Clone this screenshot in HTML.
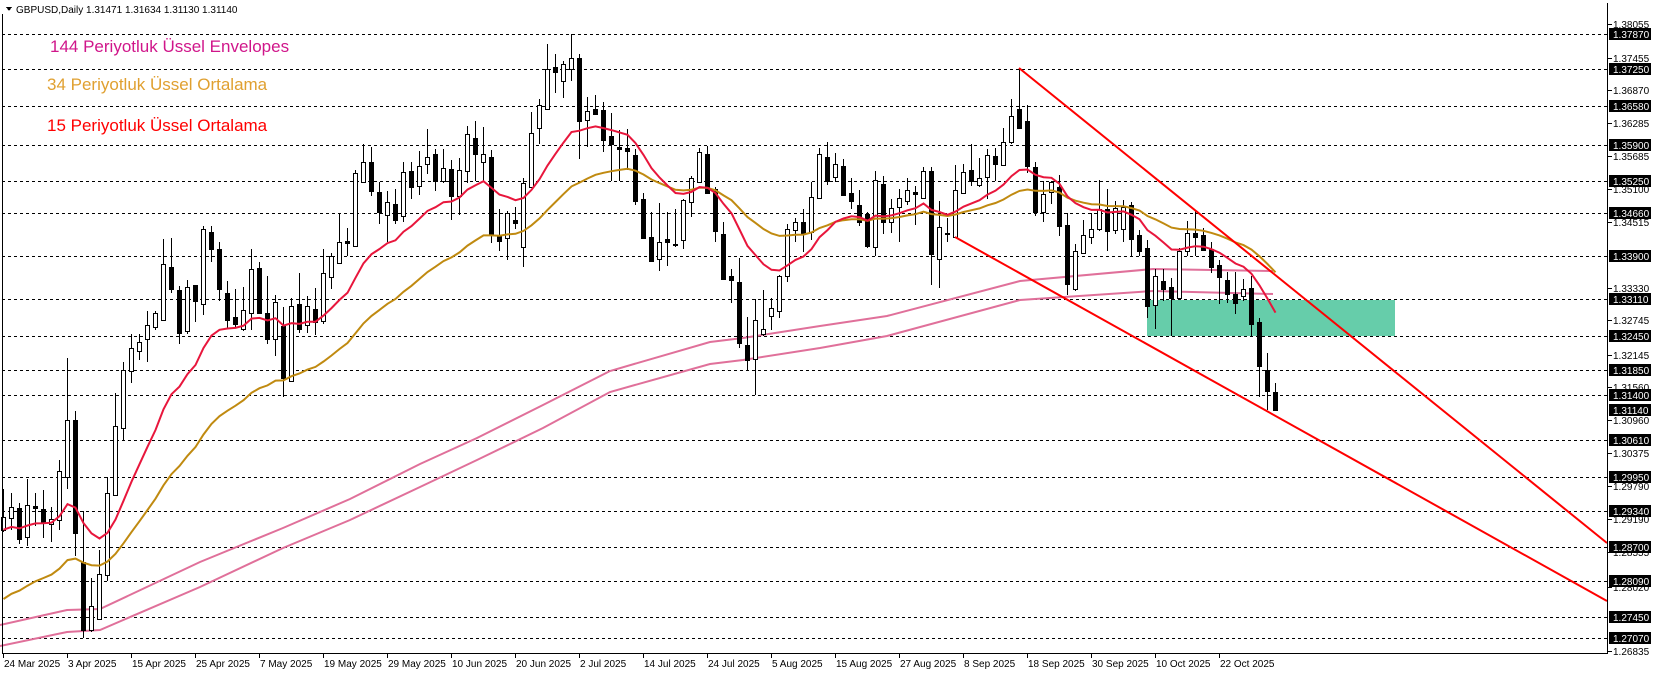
<!DOCTYPE html>
<html><head><meta charset="utf-8"><style>
html,body{margin:0;padding:0;background:#fff;}
body{width:1653px;height:675px;overflow:hidden;position:relative;font-family:"Liberation Sans",sans-serif;}
svg{position:absolute;left:0;top:0;}
</style></head><body>
<svg id="c" width="1653" height="675" xmlns="http://www.w3.org/2000/svg" shape-rendering="crispEdges">
<g id="grid"></g>
<rect x="1147" y="300" width="248" height="36" fill="#66cdaa"/>
<g id="env" fill="none" stroke="#e0709a" stroke-width="2" shape-rendering="auto">
<polyline points="0,625 67,610 100,609 200,562 283,528 350,499 420,464 477,438 543,405 610,371 710,342 743,338 820,326 887,316 1020,281 1153,269 1273,271"/>
<polyline points="0,646 67,632 100,630 200,587 283,548 350,520 420,487 477,460 543,428 610,392 710,364 743,360 820,348 887,336 1020,300 1153,291 1273,294"/>
</g>
<g id="candles"></g>
<polyline id="ema34" fill="none" stroke="#c08a10" stroke-width="2" shape-rendering="auto"/>
<polyline id="ema15" fill="none" stroke="#e8163c" stroke-width="2" shape-rendering="auto"/>
<g stroke="#ff0000" stroke-width="2" shape-rendering="auto">
<line x1="1019" y1="68" x2="1607" y2="543"/>
<line x1="955" y1="237" x2="1607" y2="601"/>
</g>
<g stroke="#000" stroke-width="1">
<line x1="2.5" y1="14" x2="2.5" y2="653"/>
<line x1="1607.5" y1="3" x2="1607.5" y2="653"/>
<line x1="2" y1="653.5" x2="1608" y2="653.5"/>
</g>
<g id="axis" font-family="Liberation Sans, sans-serif" font-size="10"></g>
<g id="dates" font-family="Liberation Sans, sans-serif" font-size="10" fill="#000"></g>
<polygon points="6,7 12,7 9,11" fill="#000"/>
<text x="16" y="13" font-size="10" font-family="Liberation Sans, sans-serif">GBPUSD,Daily  1.31471 1.31634 1.31130 1.31140</text>
<text x="50" y="52" font-size="17" fill="#d0168a" font-family="Liberation Sans, sans-serif">144 Periyotluk Üssel Envelopes</text>
<text x="47" y="90" font-size="17" fill="#e0a030" font-family="Liberation Sans, sans-serif">34 Periyotluk Üssel Ortalama</text>
<text x="47" y="131" font-size="17" fill="#ff0000" font-family="Liberation Sans, sans-serif">15 Periyotluk Üssel Ortalama</text>
</svg>
<script>
var NS="http://www.w3.org/2000/svg";
function el(t,a,p){var e=document.createElementNS(NS,t);for(var k in a)e.setAttribute(k,a[k]);p.appendChild(e);return e;}
var bars=[[1220,1250,1150,1255,1],[1195,1222,1160,1250,1],[1197,1272,1185,1285,0],[1190,1267,1125,1290,1],[1193,1198,1160,1240,0],[1200,1233,1152,1270,0],[1223,1235,1195,1280,1],[1105,1225,1080,1250,1],[980,1122,830,1150,1],[980,1258,960,1315,0],
[1328,1497,1205,1515,0],[1437,1497,1368,1500,1],[1358,1470,1300,1470,1],[1160,1362,1120,1375,1],[997,1165,915,1165,1],[858,1000,838,1030,1],[805,862,770,890,1],[790,812,770,835,1],[748,782,715,838,1],[718,752,715,760,1],
[598,735,537,735,1],[605,660,535,670,0],[662,768,652,795,0],[655,762,638,770,1],[650,690,650,740,0],[512,697,505,725,1],[520,562,505,595,0],[563,660,545,690,0],[670,735,640,755,0],[728,745,660,755,0],
[712,758,655,762,1],[612,720,563,760,1],[608,718,595,722,0],[720,782,627,795,0],[693,782,675,825,1],[750,877,705,925,0],[702,885,683,885,1],[696,757,622,768,0],[702,748,677,768,1],[708,740,658,773,0],
[622,738,563,745,1],[578,630,573,660,1],[545,597,473,597,1],[542,548,510,580,0],[375,555,368,555,1],[348,397,305,400,1],[348,420,312,432,0],[422,472,398,500,0],[447,478,420,545,1],[452,492,415,500,0],
[373,482,348,495,1],[372,410,348,440,0],[358,408,322,430,1],[337,353,268,378,1],[328,395,318,420,0],[363,395,318,400,1],[365,432,343,490,0],[368,432,338,478,1],[280,370,260,400,1],[290,330,248,395,0],
[328,348,262,395,1],[337,528,320,548,0],[530,542,463,568,0],[475,535,470,590,1],[490,498,460,512,0],[400,557,388,607,1],[278,410,225,410,1],[208,265,195,305,1],[122,220,60,220,1],[115,128,85,180,0],
[108,150,100,192,1],[95,120,35,150,1],[93,248,83,342,0],[223,245,190,312,1],[220,232,185,232,0],[222,295,202,325,0],[285,305,228,395,0],[312,316,270,395,0],[315,322,268,368,0],[332,445,318,455,0],
[440,535,425,538,0],[533,592,472,595,0],[545,587,450,615,1],[538,545,472,603,0],[550,553,465,558,0],[443,540,440,563,1],[388,447,382,483,1],[325,397,315,397,1],[330,425,310,428,0],[415,517,410,545,0],
[525,635,495,637,0],[627,637,612,695,0],[642,793,585,805,0],[797,835,728,860,0],[735,832,685,920,1],[758,770,662,775,1],[707,727,683,760,1],[627,715,625,730,1],[512,628,500,642,1],[497,515,487,545,1],
[496,522,463,570,0],[435,520,398,540,1],[328,438,315,440,1],[337,395,300,405,0],[353,385,327,398,1],[358,430,342,430,0],[425,445,388,463,0],[455,497,418,505,0],[477,555,472,560,0],[393,557,370,580,1],
[403,495,382,525,0],[462,497,440,522,1],[437,460,415,545,1],[417,445,388,455,1],[422,427,407,503,0],[370,437,360,437,1],[370,575,362,650,0],[508,587,445,658,1],[522,525,485,545,0],[417,532,355,533,1],
[373,425,353,425,1],[368,395,305,408,0],[387,405,340,410,1],[332,385,318,440,1],[335,353,315,395,0],[300,355,265,358,1],[236,300,195,305,1],[220,265,118,268,0],[248,358,208,375,0],[360,472,348,482,0],
[427,472,395,495,1],[398,422,395,452,1],[410,505,380,530,0],[502,648,475,675,0],[567,660,550,665,1],[528,572,490,575,1],[512,532,475,550,1],[465,512,392,518,1],[465,518,415,567,0],[462,515,445,525,1],
[460,512,442,545,1],[455,537,448,580,0],[528,567,515,580,0],[560,702,540,730,0],[627,700,610,757,1],[640,660,610,690,0],[655,683,632,775,0],[567,682,560,685,1],[523,568,493,580,1],[522,532,468,580,0],
[527,565,510,565,0],[563,605,545,620,0],[600,630,588,697,0],[638,673,618,695,0],[672,695,618,722,0],[660,678,635,690,1],[658,745,628,775,0],[740,850,730,925,0],[858,910,818,957,0],[912,957,890,960,0]];
function Y(v){return 19.7+v*0.408;}
var cg=document.getElementById('candles');
var e15=529.7,e34=599,p15=[],p34=[];
var a15=2/16,a34=2/35;
bars.forEach(function(b,i){
 var x=Math.round(3.3+8*i);
 var t=Math.round(Y(b[0])),bo=Math.round(Y(b[1])),h=Math.round(Y(b[2])),l=Math.round(Y(b[3]));
 el('line',{x1:x+0.5,y1:h,x2:x+0.5,y2:l,stroke:'#000','stroke-width':1},cg);
 var hh=Math.max(bo-t,1);
 if(b[4]) el('rect',{x:x-1.5,y:t+0.5,width:4,height:hh,fill:'#fff',stroke:'#000','stroke-width':1},cg);
 else el('rect',{x:x-2,y:t,width:5,height:hh+1,fill:'#000'},cg);
 var c=b[4]?Y(b[0]):Y(b[1]);
 if(i>0){e15=e15+a15*(c-e15);e34=e34+a34*(c-e34);}
 p15.push((x+0.5)+','+e15.toFixed(1));p34.push((x+0.5)+','+e34.toFixed(1));
});
document.getElementById('ema15').setAttribute('points',p15.join(' '));
document.getElementById('ema34').setAttribute('points',p34.join(' '));
var grid=document.getElementById('grid'),ax=document.getElementById('axis');
var dl=[[1.37870,34],[1.37250,69],[1.36580,106],[1.35900,145],[1.35250,181],[1.34660,213],[1.33900,256],[1.33110,299],[1.32450,336],[1.31850,370],[1.31400,395],[1.30610,440],[1.29950,477],[1.29340,511],[1.28700,547],[1.28090,581],[1.27450,617],[1.27070,638]];
dl.forEach(function(d){el('line',{x1:2,y1:d[1]+0.5,x2:1607,y2:d[1]+0.5,stroke:'#000','stroke-width':1,'stroke-dasharray':'3,3'},grid);});
var pl=[[1.38055,24],[1.37455,58],[1.36870,90],[1.36285,123],[1.35685,156],[1.35100,189],[1.34515,222],[1.33330,288],[1.32745,320],[1.32145,355],[1.31560,387],[1.30960,420],[1.30375,453],[1.29790,486],[1.29190,519],[1.28555,552],[1.28020,587],[1.26835,651]];
pl.forEach(function(d){el('line',{x1:1608,y1:d[1]+0.5,x2:1612,y2:d[1]+0.5,stroke:'#000'},ax);var t=el('text',{x:1613,y:d[1]+4,fill:'#000'},ax);t.textContent=d[0].toFixed(5);});
dl.concat([[1.31140,410]]).forEach(function(d){el('rect',{x:1609,y:d[1]-6,width:42,height:12,fill:'#000'},ax);var t=el('text',{x:1613,y:d[1]+4,fill:'#fff'},ax);t.textContent=d[0].toFixed(5);});
var dates=["24 Mar 2025","3 Apr 2025","15 Apr 2025","25 Apr 2025","7 May 2025","19 May 2025","29 May 2025","10 Jun 2025","20 Jun 2025","2 Jul 2025","14 Jul 2025","24 Jul 2025","5 Aug 2025","15 Aug 2025","27 Aug 2025","8 Sep 2025","18 Sep 2025","30 Sep 2025","10 Oct 2025","22 Oct 2025"];
var dg=document.getElementById('dates');
dates.forEach(function(s,i){var x=3+64*i;el('line',{x1:x+0.5,y1:654,x2:x+0.5,y2:658,stroke:'#000'},dg);var t=el('text',{x:x+1,y:667},dg);t.textContent=s;});
</script>
</body></html>
